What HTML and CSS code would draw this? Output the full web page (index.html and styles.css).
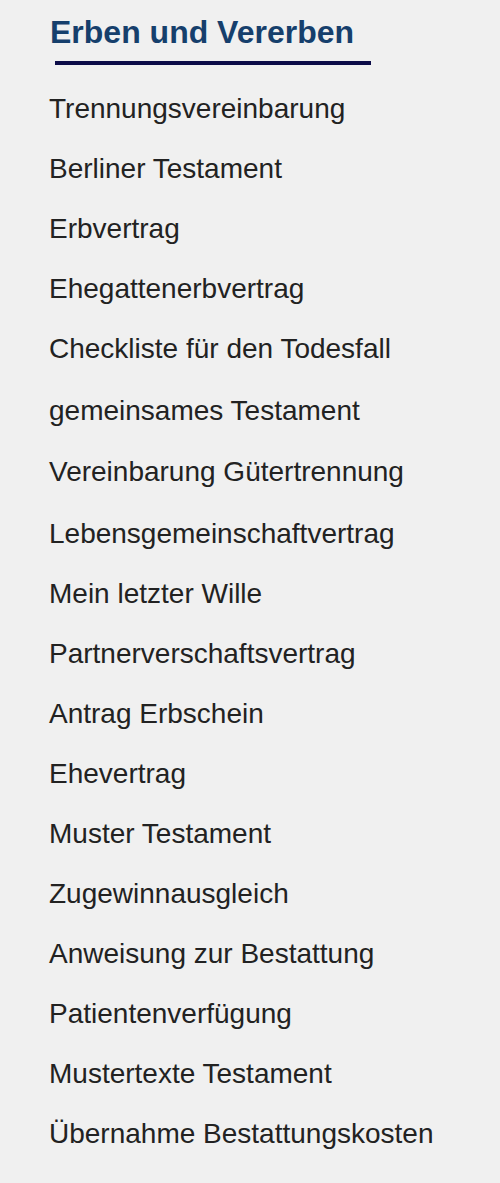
FILE: index.html
```html
<!DOCTYPE html>
<html lang="de">
<head>
    <meta charset="UTF-8">
    <meta name="viewport" content="width=device-width, initial-scale=1.0">
    <title>Erben und Vererben</title>
    <link rel="stylesheet" href="styles.css">
</head>
<body>
    <div class="sidebar">
        <h2 class="sidebar-title">Erben und Vererben</h2>
        <ul class="link-list">
            <li><a href="#">Trennungsvereinbarung</a></li>
            <li><a href="#">Berliner Testament</a></li>
            <li><a href="#">Erbvertrag</a></li>
            <li><a href="#">Ehegattenerbvertrag</a></li>
            <li><a href="#">Checkliste für den Todesfall</a></li>
            <li class="spaced"><a href="#">gemeinsames Testament</a></li>
            <li class="spaced"><a href="#">Vereinbarung Gütertrennung</a></li>
            <li class="spaced"><a href="#">Lebensgemeinschaftvertrag</a></li>
            <li><a href="#">Mein letzter Wille</a></li>
            <li><a href="#">Partnerverschaftsvertrag</a></li>
            <li><a href="#">Antrag Erbschein</a></li>
            <li><a href="#">Ehevertrag</a></li>
            <li><a href="#">Muster Testament</a></li>
            <li><a href="#">Zugewinnausgleich</a></li>
            <li><a href="#">Anweisung zur Bestattung</a></li>
            <li><a href="#">Patientenverfügung</a></li>
            <li><a href="#">Mustertexte Testament</a></li>
            <li><a href="#">Übernahme Bestattungskosten</a></li>
        </ul>
    </div>
</body>
</html>
```

FILE: styles.css
```css
body {
    margin: 0;
    background-color: #f0f0f0;
    font-family: "Liberation Sans", Arial, sans-serif;
    color: #222;
}
.sidebar {
    padding: 14px 0 0 49px;
}
.sidebar-title {
    margin: 0 0 0 1px;
    font-size: 32px;
    font-weight: bold;
    line-height: 36px;
    color: #163f6c;
}
.sidebar-title::after {
    content: "";
    display: block;
    width: 316px;
    height: 4px;
    margin: 11px 0 0 5px;
    background: #0c0c48;
}
.link-list {
    list-style: none;
    margin: 14px 0 0 0;
    padding: 0;
}
.link-list li {
    font-size: 28px;
    line-height: 60px;
}
.link-list li.spaced {
    margin-top: 1.5px;
}
.link-list a {
    color: #222;
    text-decoration: none;
}
.link-list a:hover {
    text-decoration: underline;
}
```
